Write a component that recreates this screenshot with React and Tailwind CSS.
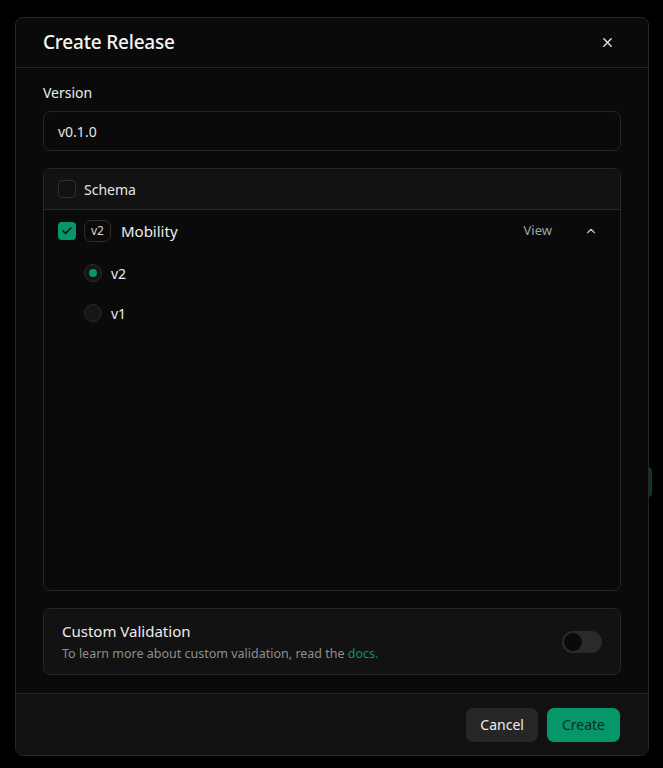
import React from "react";

const font = { fontFamily: '"Noto Sans", "Open Sans", sans-serif' };

function Check() {
  return (
    <svg width="12" height="12" viewBox="0 0 24 24" fill="none" stroke="#0a0a0a" strokeWidth="3" strokeLinecap="round" strokeLinejoin="round">
      <path d="M20 6 9 17l-5-5" />
    </svg>
  );
}

export default function App() {
  return (
    <div className="relative w-[663px] h-[768px] bg-black overflow-hidden" style={font}>
      <div className="absolute left-[648px] top-[467px] w-[4px] h-[30px] rounded-r bg-[#0b3a2a]" />
      <div className="absolute left-[15px] top-[17px] w-[634px] h-[739px] flex flex-col rounded-[8px] border border-[#262626] bg-[#0a0a0a] overflow-hidden">
        {/* header */}
        <div className="flex items-center justify-between h-[50px] px-[27px] border-b border-[#262626] shrink-0">
          <h2 className="text-[19px] font-medium text-[#f5f5f5] tracking-[-0.2px]">Create Release</h2>
          <svg width="11" height="11" viewBox="0 0 12 12" className="mr-[8px]" stroke="#e5e5e5" strokeWidth="1.5" strokeLinecap="round">
            <path d="M2 2l8 8M10 2l-8 8" />
          </svg>
        </div>
        {/* body */}
        <div className="flex flex-col flex-1 px-[27px] pt-[16px] pb-[18px]">
          <label className="text-[14px] text-[#ededed] leading-[18px]">Version</label>
          <div className="mt-[9px] h-[40px] flex items-center px-[14px] rounded-[7px] border border-[#262626] bg-[#0a0a0a] text-[14px] text-[#e5e5e5]">
            v0.1.0
          </div>
          <div className="mt-[17px] h-[423px] flex flex-col rounded-[7px] border border-[#262626] overflow-hidden">
            <div className="h-[41px] flex items-center px-[14px] gap-[8px] bg-[#121212] border-b border-[#262626] shrink-0">
              <div className="w-[18px] h-[18px] rounded-[4px] border border-[#2e2e2e] bg-[#111]" />
              <span className="text-[14px] text-[#e5e5e5]">Schema</span>
            </div>
            <div className="h-[42px] flex items-center px-[14px] shrink-0">
              <div className="w-[18px] h-[18px] rounded-[4px] bg-[#059669] flex items-center justify-center">
                <Check />
              </div>
              <div className="ml-[8px] h-[22px] px-[6px] flex items-center rounded-[7px] border border-[#2e2e2e] text-[12px] text-[#d4d4d4]">v2</div>
              <span className="ml-[10px] text-[15px] text-[#ededed]">Mobility</span>
              <span className="ml-auto text-[13px] text-[#a3a3a3]">View</span>
              <svg width="14" height="14" viewBox="0 0 24 24" fill="none" stroke="#c4c4c4" strokeWidth="2" strokeLinecap="round" strokeLinejoin="round" className="ml-[32px] mr-[8px]">
                <path d="m18 15-6-6-6 6" />
              </svg>
            </div>
            <div className="flex flex-col pl-[40px] pt-[12px] gap-[22px]">
              <div className="flex items-center gap-[9px] h-[18px]">
                <div className="w-[18px] h-[18px] rounded-full border border-[#2e2e2e] bg-[#141414] flex items-center justify-center">
                  <div className="w-[8px] h-[8px] rounded-full bg-[#059669]" />
                </div>
                <span className="text-[14px] text-[#ededed]">v2</span>
              </div>
              <div className="flex items-center gap-[9px] h-[18px]">
                <div className="w-[18px] h-[18px] rounded-full border border-[#2a2a2a] bg-[#161616]" />
                <span className="text-[14px] text-[#ededed]">v1</span>
              </div>
            </div>
          </div>
          <div className="mt-[17px] h-[67px] flex items-center justify-between px-[18px] rounded-[7px] border border-[#262626] bg-[#121212]">
            <div className="flex flex-col">
              <span className="text-[15px] text-[#ededed] leading-[18px]">Custom Validation</span>
              <span className="mt-[6px] text-[12.5px] text-[#8f8f8f] leading-[16px]">
                To learn more about custom validation, read the <span className="text-[#059669]">docs.</span>
              </span>
            </div>
            <div className="w-[40px] h-[22px] rounded-full bg-[#2a2a2a] flex items-center px-[2px]">
              <div className="w-[18px] h-[18px] rounded-full bg-[#0a0a0a]" />
            </div>
          </div>
        </div>
        {/* footer */}
        <div className="h-[62px] shrink-0 border-t border-[#262626] bg-[#111111] flex items-center justify-end gap-[9px] px-[28px]">
          <button className="h-[34px] px-[14px] rounded-[7px] bg-[#262626] text-[14px] text-[#ededed]">Cancel</button>
          <button className="h-[34px] px-[15px] rounded-[7px] bg-[#059669] text-[14px] text-[#0f2a20]">Create</button>
        </div>
      </div>
    </div>
  );
}
